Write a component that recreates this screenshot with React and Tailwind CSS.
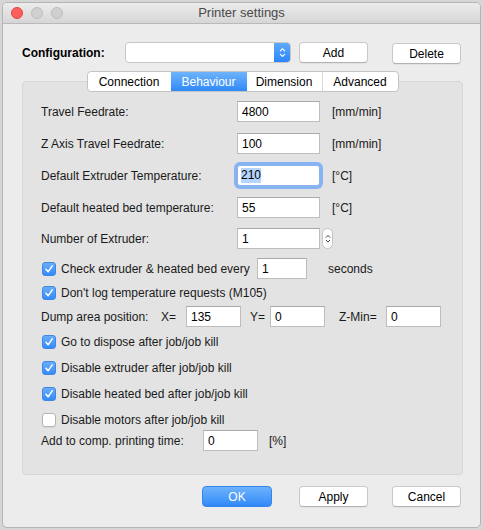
import React from "react";

const font = { fontFamily: '"Liberation Sans", Arial, sans-serif' };

function Field({ value, w = "w-[83px]", focused = false }) {
  if (focused) {
    return (
      <div className={`${w} h-[21px] rounded-[3px] ring-[3px] ring-[#86b3f3] bg-white border border-[#8fb2e8] flex items-center px-[3px]`}>
        <span className="bg-[#b4d5fe] text-black leading-[15px]">{value}</span>
      </div>
    );
  }
  return (
    <div className={`${w} h-[21px] bg-white border border-[#bdbdbd] border-t-[#a9a9a9] flex items-center px-[4px] text-black`}>
      {value}
    </div>
  );
}

function Check({ checked = true }) {
  if (!checked) {
    return <div className="w-[14px] h-[14px] rounded-[3px] bg-white border border-[#b5b5b5] shadow-[0_1px_0_rgba(0,0,0,0.05)]" />;
  }
  return (
    <div className="w-[14px] h-[14px] rounded-[3px] bg-gradient-to-b from-[#69aefc] to-[#338af7] border border-[#3f86e6] flex items-center justify-center">
      <svg width="10" height="10" viewBox="0 0 10 10">
        <path d="M2 5.2 L4.1 7.8 L8.2 1.8" fill="none" stroke="white" strokeWidth="1.5" strokeLinecap="round" strokeLinejoin="round" />
      </svg>
    </div>
  );
}

function Row({ label, value, unit, focused, mt }) {
  return (
    <div className={`flex items-center h-[21px] ${mt}`}>
      <div className="w-[196px]">{label}</div>
      <Field value={value} focused={focused} />
      <div className="ml-[12px]">{unit}</div>
    </div>
  );
}

function CheckRow({ label, checked = true, mt }) {
  return (
    <div className={`flex items-center h-[20px] ${mt}`}>
      <div className="ml-[1px] mr-[5px]">
        <Check checked={checked} />
      </div>
      <span>{label}</span>
    </div>
  );
}

function Button({ children, primary = false, className = "" }) {
  if (primary) {
    return (
      <div className={`w-[70px] h-[21px] rounded-[4px] bg-gradient-to-b from-[#6db3fc] to-[#2f89f8] border border-[#3484ee] text-white flex items-center justify-center ${className}`}>
        {children}
      </div>
    );
  }
  return (
    <div className={`w-[69px] h-[21px] rounded-[4px] bg-white border border-[#c9c9c9] border-b-[#b3b3b3] shadow-[0_1px_0_rgba(0,0,0,0.04)] text-black flex items-center justify-center ${className}`}>
      {children}
    </div>
  );
}

function Chevrons({ size = 8, color = "white" }) {
  return (
    <svg width={size} height={size * 1.6} viewBox="0 0 8 13">
      <path d="M1.5 4.5 L4 2 L6.5 4.5" fill="none" stroke={color} strokeWidth="1.3" strokeLinecap="round" strokeLinejoin="round" />
      <path d="M1.5 8.5 L4 11 L6.5 8.5" fill="none" stroke={color} strokeWidth="1.3" strokeLinecap="round" strokeLinejoin="round" />
    </svg>
  );
}

export default function App() {
  return (
    <div className="w-[483px] h-[530px] bg-[#d6d6d6] pt-[2px] pl-[2px] text-[12px] text-[#1a1a1a]" style={font}>
      <div className="w-[479px] h-[526px] rounded-[5px] overflow-hidden border border-[#b4b4b4] bg-[#ececec] flex flex-col">
        {/* title bar */}
        <div className="h-[21px] shrink-0 bg-gradient-to-b from-[#ececec] to-[#d6d6d6] border-b border-[#b9b9b9] flex items-center relative">
          <div className="flex gap-[8px] pl-[8px]">
            <div className="w-[12px] h-[12px] rounded-full bg-[#fc605c] border border-[#e0443e]" />
            <div className="w-[12px] h-[12px] rounded-full bg-[#d0d0d0] border border-[#bcbcbc]" />
            <div className="w-[12px] h-[12px] rounded-full bg-[#d0d0d0] border border-[#bcbcbc]" />
          </div>
          <div className="flex-1 text-center text-[13px] text-[#4a4a4a] pr-[60px]">Printer settings</div>
        </div>

        {/* body */}
        <div className="pl-[19px] pr-[17px]">
          <div className="flex items-start mt-[18px] h-[22px]">
            <div className="w-[103px] font-bold text-[12px] text-black pt-[2px]">Configuration:</div>
            <div className="w-[166px] h-[21px] rounded-[4px] bg-white border border-[#c7c7c7] flex justify-end overflow-hidden">
              <div className="w-[16px] h-full bg-gradient-to-b from-[#5fa9fb] to-[#2a86f7] flex items-center justify-center">
                <Chevrons size={7} />
              </div>
            </div>
            <Button className="ml-[8px]">Add</Button>
            <Button className="ml-[24px] mt-[1px]">Delete</Button>
          </div>

          {/* tabs */}
          <div className="flex justify-center mt-[7px] relative z-10">
            <div className="flex h-[21px] rounded-[4px] bg-white border border-[#c4c4c4] overflow-hidden text-black">
              <div className="w-[83px] flex items-center justify-center">Connection</div>
              <div className="w-[76px] flex items-center justify-center bg-gradient-to-b from-[#6db3fc] to-[#2f89f8] text-white">Behaviour</div>
              <div className="w-[76px] flex items-center justify-center border-r border-[#d8d8d8]">Dimension</div>
              <div className="w-[75px] flex items-center justify-center">Advanced</div>
            </div>
          </div>

          {/* panel */}
          <div className="-mt-[11px] w-[441px] rounded-[4px] bg-[#e3e3e3] border border-[#d6d6d6] pt-[19px] pb-[23px] pl-[18px]">
            <Row label="Travel Feedrate:" value="4800" unit="[mm/min]" />
            <Row label="Z Axis Travel Feedrate:" value="100" unit="[mm/min]" mt="mt-[11px]" />
            <Row label="Default Extruder Temperature:" value="210" unit="[°C]" focused mt="mt-[11px]" />
            <Row label="Default heated bed temperature:" value="55" unit="[°C]" mt="mt-[11px]" />
            <div className="flex items-center h-[21px] mt-[10px]">
              <div className="w-[196px]">Number of Extruder:</div>
              <Field value="1" />
              <div className="ml-[2px] w-[11px] h-[21px] rounded-full bg-white border border-[#c4c4c4] flex items-center justify-center">
                <Chevrons size={6} color="#333" />
              </div>
            </div>

            <div className="flex items-center h-[21px] mt-[9px]">
              <div className="ml-[1px] mr-[5px]">
                <Check />
              </div>
              <span className="w-[196px] shrink-0">Check extruder &amp; heated bed every</span>
              <Field value="1" w="w-[50px]" />
              <span className="ml-[21px]">seconds</span>
            </div>

            <CheckRow label="Don't log temperature requests (M105)" mt="mt-[4px]" />

            <div className="flex items-center h-[21px] mt-[3px]">
              <span className="w-[120px]">Dump area position:</span>
              <span className="w-[25px]">X=</span>
              <Field value="135" w="w-[55px]" />
              <span className="ml-[9px] w-[20px]">Y=</span>
              <Field value="0" w="w-[55px]" />
              <span className="ml-[14px] w-[47px]">Z-Min=</span>
              <Field value="0" w="w-[55px]" />
            </div>

            <CheckRow label="Go to dispose after job/job kill" mt="mt-[5px]" />
            <CheckRow label="Disable extruder after job/job kill" mt="mt-[6px]" />
            <CheckRow label="Disable heated bed after job/job kill" mt="mt-[6px]" />
            <CheckRow label="Disable motors after job/job kill" checked={false} mt="mt-[6px]" />

            <div className="flex items-center h-[21px]">
              <span className="w-[162px]">Add to comp. printing time:</span>
              <Field value="0" w="w-[55px]" />
              <span className="ml-[11px]">[%]</span>
            </div>
          </div>

          {/* footer buttons */}
          <div className="flex mt-[11px] pl-[180px]">
            <Button primary>OK</Button>
            <Button className="ml-[27px]">Apply</Button>
            <Button className="ml-[24px]">Cancel</Button>
          </div>
        </div>
      </div>
    </div>
  );
}
